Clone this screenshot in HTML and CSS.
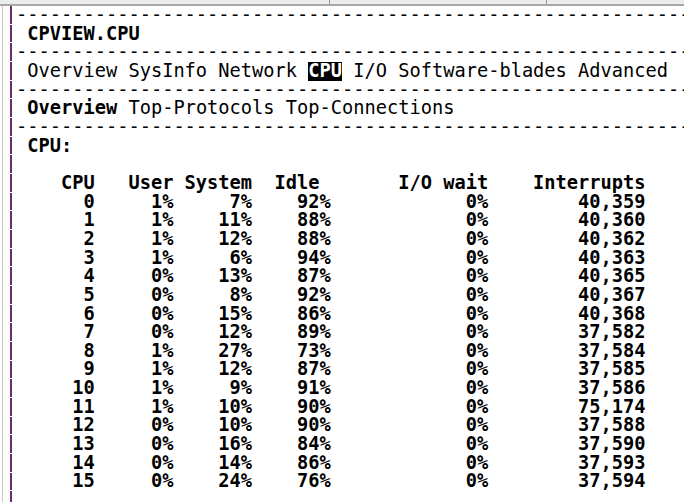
FILE: index.html
```html
<!DOCTYPE html>
<html>
<head>
<meta charset="utf-8">
<link rel="stylesheet" href="styles.css">
</head>
<body>
<div class="chrome">
  <div class="tab tab-a"></div>
  <div class="tab tab-b"></div>
  <div class="tab tab-c"></div>
</div>
<div class="screen">
  <div class="gutter">
    <div class="edge"></div>
    <div class="bar"></div>
  </div>
  <div class="term">
    <div class="line rule">------------------------------------------------------------</div>
    <div class="line strong"> CPVIEW.CPU</div>
    <div class="line rule">------------------------------------------------------------</div>
    <div class="line"> Overview SysInfo Network <span class="active">CPU</span> I/O Software-blades Advanced</div>
    <div class="line rule">------------------------------------------------------------</div>
    <div class="line"> <b>Overview</b> Top-Protocols Top-Connections</div>
    <div class="line rule">------------------------------------------------------------</div>
    <div class="line strong"> CPU:</div>
    <div class="line"> </div>
    <div class="grid">
      <div>CPU</div><div>User</div><div>System</div><div class="pad">Idle</div><div>I/O wait</div><div>Interrupts</div>
      <div>0</div><div>1%</div><div>7%</div><div>92%</div><div>0%</div><div>40,359</div>
      <div>1</div><div>1%</div><div>11%</div><div>88%</div><div>0%</div><div>40,360</div>
      <div>2</div><div>1%</div><div>12%</div><div>88%</div><div>0%</div><div>40,362</div>
      <div>3</div><div>1%</div><div>6%</div><div>94%</div><div>0%</div><div>40,363</div>
      <div>4</div><div>0%</div><div>13%</div><div>87%</div><div>0%</div><div>40,365</div>
      <div>5</div><div>0%</div><div>8%</div><div>92%</div><div>0%</div><div>40,367</div>
      <div>6</div><div>0%</div><div>15%</div><div>86%</div><div>0%</div><div>40,368</div>
      <div>7</div><div>0%</div><div>12%</div><div>89%</div><div>0%</div><div>37,582</div>
      <div>8</div><div>1%</div><div>27%</div><div>73%</div><div>0%</div><div>37,584</div>
      <div>9</div><div>1%</div><div>12%</div><div>87%</div><div>0%</div><div>37,585</div>
      <div>10</div><div>1%</div><div>9%</div><div>91%</div><div>0%</div><div>37,586</div>
      <div>11</div><div>1%</div><div>10%</div><div>90%</div><div>0%</div><div>75,174</div>
      <div>12</div><div>0%</div><div>10%</div><div>90%</div><div>0%</div><div>37,588</div>
      <div>13</div><div>0%</div><div>16%</div><div>84%</div><div>0%</div><div>37,590</div>
      <div>14</div><div>0%</div><div>14%</div><div>86%</div><div>0%</div><div>37,593</div>
      <div>15</div><div>0%</div><div>24%</div><div>76%</div><div>0%</div><div>37,594</div>
    </div>
  </div>
</div>
</body>
</html>
```
FILE: styles.css
```css
html, body {
  margin: 0;
  padding: 0;
  background: #ffffff;
  width: 684px;
  height: 502px;
  overflow: hidden;
}

.chrome {
  display: flex;
  height: 4px;
  background: #ececec;
  border-bottom: 2px solid #a8a8a8;
}

.tab {
  height: 100%;
}

.tab-a {
  width: 329px;
  border-right: 1px solid #9a9a9a;
}

.tab-b {
  width: 216px;
  border-right: 1px solid #9a9a9a;
}

.tab-c {
  flex: 1;
}

.screen {
  display: flex;
  height: 496px;
}

.gutter {
  display: flex;
  width: 16px;
  flex: none;
}

.edge {
  width: 1px;
  margin-left: 2px;
  background: #c8c8c8;
}

.bar {
  width: 2px;
  margin-left: 7px;
  background: repeating-linear-gradient(to bottom, #6c2a6e 0, #6c2a6e 17.67px, transparent 17.67px, transparent 18.67px);
}

.term {
  flex: 1;
  overflow: hidden;
  font-family: "DejaVu Sans Mono", "Liberation Mono", monospace;
  font-size: 18.68px;
  line-height: 18.67px;
  color: #000;
}

.line {
  white-space: pre;
  height: 18.67px;
}

.strong,
.line b {
  font-weight: bold;
}

.active {
  display: inline-block;
  height: 18.67px;
  background: #000;
  color: #fff;
  font-weight: bold;
}

.grid {
  display: grid;
  grid-template-columns: 7ch 7ch 7ch 7ch 14ch 14ch;
  grid-auto-rows: 18.67px;
  font-weight: bold;
  text-align: right;
  white-space: pre;
}

.pad {
  padding-right: 1ch;
}
```
